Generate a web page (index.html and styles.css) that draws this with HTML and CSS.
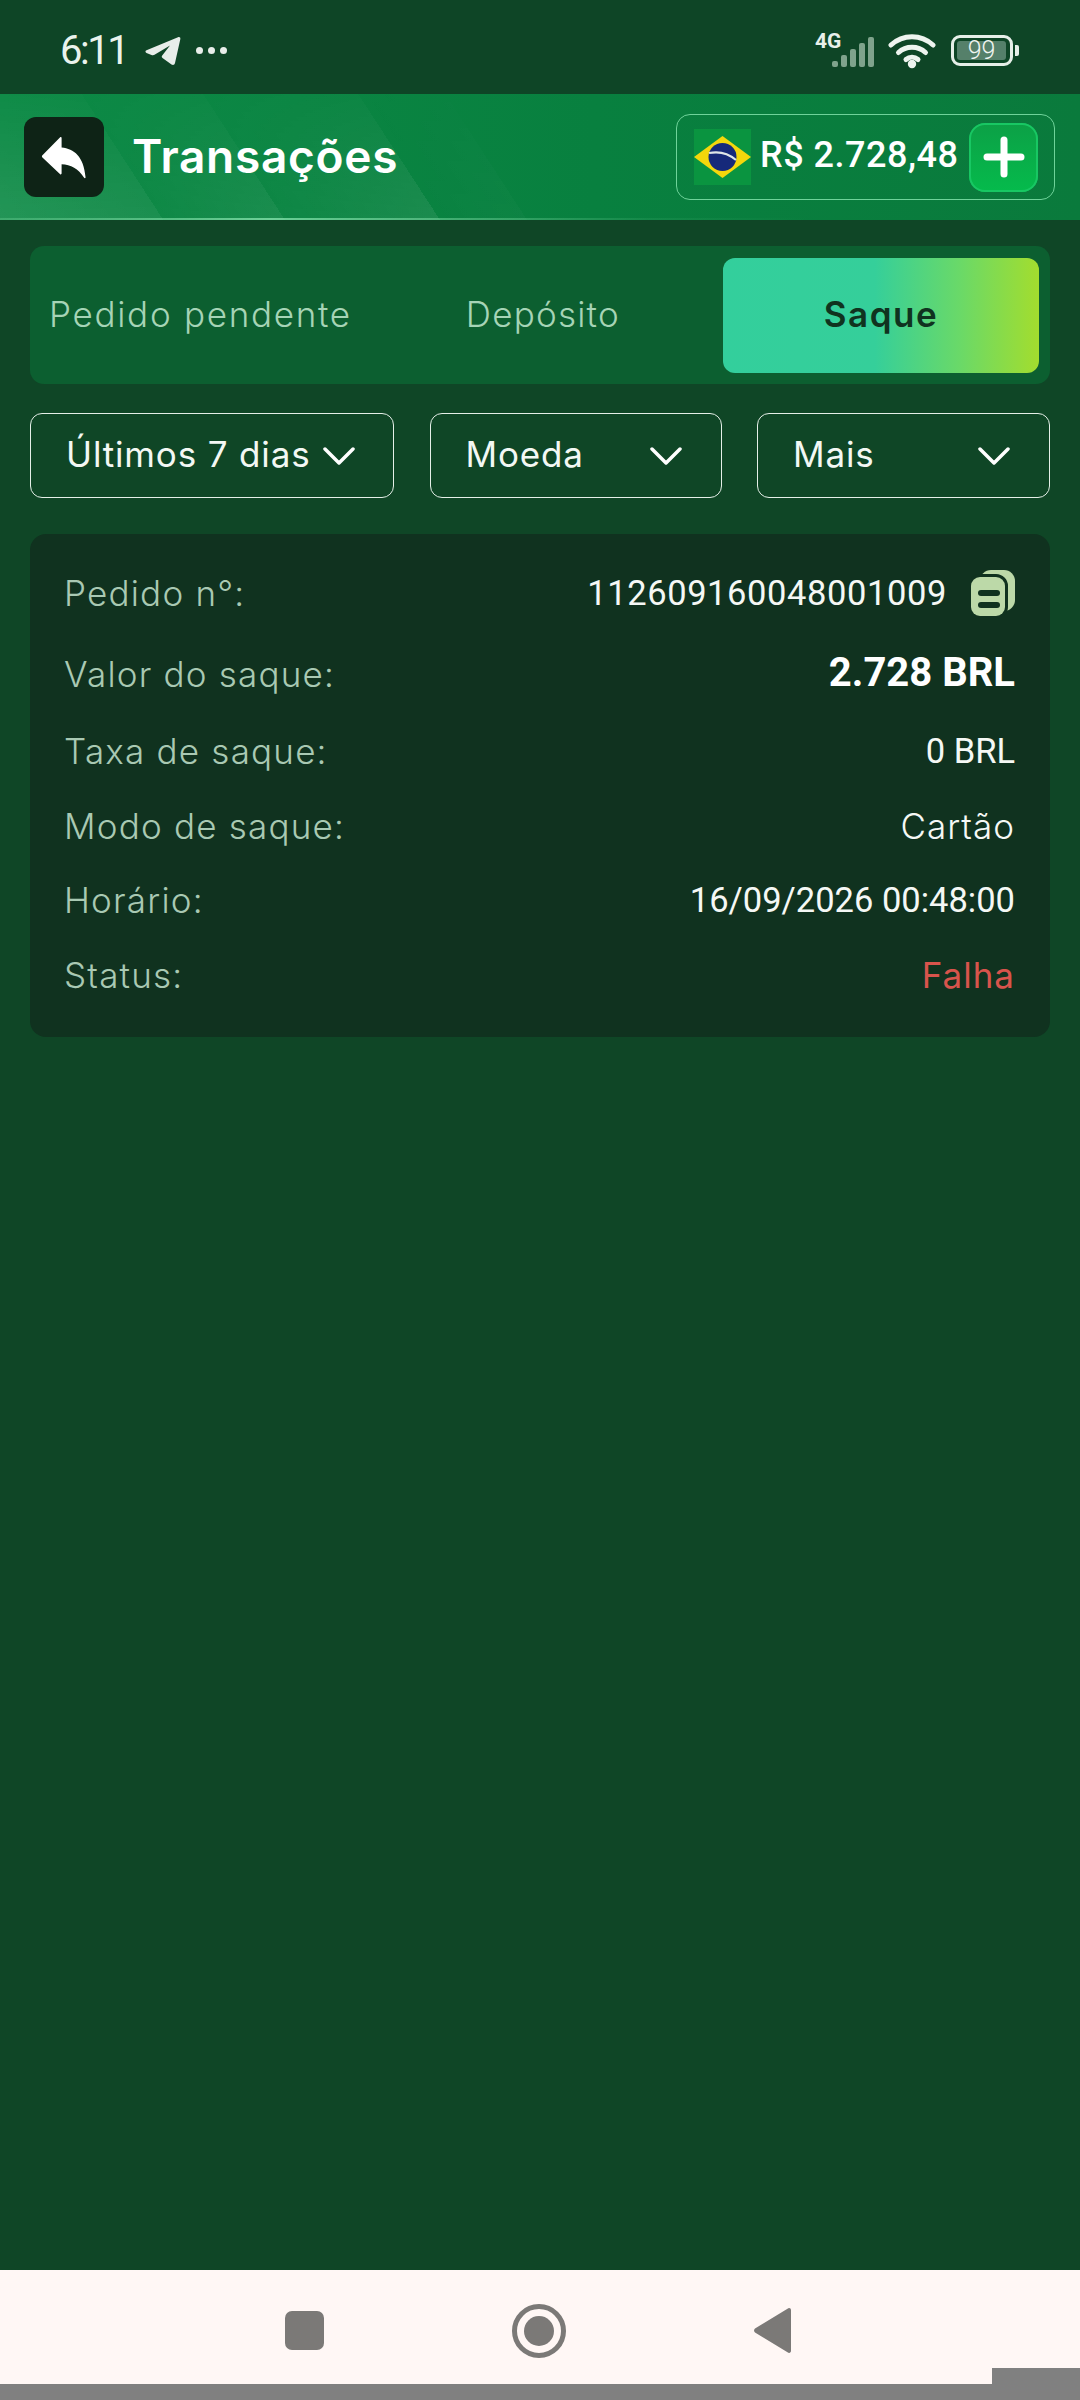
FILE: index.html
```html
<!DOCTYPE html>
<html lang="pt">
<head>
<meta charset="utf-8">
<title>Transações</title>
<link rel="stylesheet" href="styles.css">
</head>
<body>
<div class="page">
  <div class="statusbar">
    <div class="status-left">
      <span class="time">6:11</span>
      <svg class="tg" viewBox="0 0 36 30"><path d="M1.5 14.2 33 1.2c1.6-.6 2.7.4 2.3 2L30 27c-.4 1.9-1.900 2.500-3.500 1.500l-9-6.500c-1-.8-1-1.800-.1-2.700L25 9.500 9.500 18.800c-.9.5-2 .5-3 .1l-5-2c-1.400-.6-1.400-2.100 0-2.700z"/></svg>
      <span class="dots"><i></i><i></i><i></i></span>
    </div>
    <div class="status-right">
      <div class="net">
        <span class="net-text">4G</span>
        <svg class="net-svg" viewBox="0 0 62 34"><g class="net-bars"><rect x="18" y="27" width="6" height="6" rx="2"/><rect x="27" y="21" width="6" height="12" rx="2"/><rect x="36" y="15" width="6" height="18" rx="2"/><rect x="45" y="9" width="6" height="24" rx="2"/><rect x="54" y="3" width="6" height="30" rx="2"/></g></svg>
      </div>
      <svg class="wifi" viewBox="0 0 48 36"><path class="wifi-arc" d="M3 12C15 1 33 1 45 12"/><path class="wifi-arc" d="M10.500 19.500C18 12.500 30 12.500 37.500 19.500"/><path class="wifi-arc" d="M18 26.500C21.500 23.500 26.500 23.500 30 26.500"/><circle class="wifi-dot" cx="24" cy="31" r="4.200"/></svg>
      <div class="battery"><div class="battery-body"><div class="battery-fill">99</div></div><div class="battery-nub"></div></div>
    </div>
  </div>

  <header class="appbar">
    <div class="appbar-left">
      <div class="back">
        <svg class="back-icon" viewBox="0 0 48 48"><path d="M20 3.500c.8-.6 1.500 0 1.500 1V14c13 1.500 23 9 25 31 .1 1.300-1 1.500-1.700.5C39 36 31 32 21.500 31.500V41c0 1-.8 1.500-1.500 1L1.500 24.500c-.7-.7-.7-1.600 0-2.300z"/></svg>
      </div>
      <h1 class="title">Transações</h1>
    </div>
    <div class="balance">
      <svg class="flag" viewBox="0 0 57 56"><rect width="57" height="56" fill="#0a9440"/><path d="M28.500 7 57 28 28.500 49 0 28z" fill="#f4d70c"/><circle cx="28.500" cy="28" r="14" fill="#16297a"/><path d="M15 24c10-2 19 0 27 7" fill="none" stroke="#dfe6e8" stroke-width="2.200"/></svg>
      <span class="amount">R$ 2.728,48</span>
      <div class="plus">
        <svg class="plus-icon" viewBox="0 0 42 42"><path d="M21 4v34M4 21h34"/></svg>
      </div>
    </div>
  </header>

  <main class="content">
    <div class="tabs">
      <div class="tab tab-pending">Pedido pendente</div>
      <div class="tab tab-deposit">Depósito</div>
      <div class="tab tab-active">Saque</div>
    </div>

    <div class="filters">
      <div class="filter filter-date"><span class="filter-label">Últimos 7 dias</span><svg class="chev" viewBox="0 0 32 20"><path d="M2 3l14 14L30 3"/></svg></div>
      <div class="filter filter-coin"><span class="filter-label">Moeda</span><svg class="chev" viewBox="0 0 32 20"><path d="M2 3l14 14L30 3"/></svg></div>
      <div class="filter filter-more"><span class="filter-label">Mais</span><svg class="chev" viewBox="0 0 32 20"><path d="M2 3l14 14L30 3"/></svg></div>
    </div>

    <section class="card">
      <div class="row row-tall">
        <span class="label">Pedido n°:</span>
        <span class="value-wrap">
          <span class="value num order">112609160048001009</span>
          <svg class="copy" viewBox="0 0 44 46"><rect class="copy-back" x="9" y="0" width="35" height="41" rx="11"/><rect class="copy-front" x="0" y="7" width="34" height="39" rx="9"/><rect class="copy-line" x="7" y="20" width="22" height="6" rx="3"/><rect class="copy-line" x="7" y="32" width="22" height="6" rx="3"/></svg>
        </span>
      </div>
      <div class="row row-tall">
        <span class="label">Valor do saque:</span>
        <span class="value num strong">2.728 BRL</span>
      </div>
      <div class="row">
        <span class="label">Taxa de saque:</span>
        <span class="value num">0 BRL</span>
      </div>
      <div class="row">
        <span class="label">Modo de saque:</span>
        <span class="value">Cartão</span>
      </div>
      <div class="row">
        <span class="label">Horário:</span>
        <span class="value num">16/09/2026 00:48:00</span>
      </div>
      <div class="row">
        <span class="label">Status:</span>
        <span class="value fail">Falha</span>
      </div>
    </section>
  </main>

  <nav class="navbar">
    <div class="nav-square"></div>
    <div class="nav-circle"><div class="nav-dot"></div></div>
    <svg class="nav-back" viewBox="0 0 37 45"><path d="M33.500.8c1.500-1.400 3.500-.6 3.500 1.400v40.600c0 2-2 2.800-3.500 1.400L1 24.500c-1.300-1.200-1.300-2.800 0-4z"/></svg>
  </nav>
  <div class="gesture"></div>
  <div class="corner"></div>
</div>
</body>
</html>
```
FILE: styles.css
```css
* { box-sizing: border-box; }
html, body { margin: 0; padding: 0; }
body { font-family: "Inter", "Roboto", sans-serif; background: #0f4626; }

.page {
  position: relative;
  width: 1080px;
  height: 2400px;
  display: flex;
  flex-direction: column;
  background: #0f4626;
  overflow: hidden;
}

/* status bar */
.statusbar {
  height: 94px;
  flex: none;
  background: #0e4526;
  display: flex;
  justify-content: space-between;
  align-items: center;
  padding: 7px 61px 0 60px;
  color: #eaf3ec;
}
.status-left { display: flex; align-items: center; }
.time { font-family: "Roboto", sans-serif; font-size: 40px; font-weight: 400; line-height: 48px; letter-spacing: -2.500px; }
.tg { width: 36px; height: 30px; margin-left: 18px; fill: #e8eeea; }
.dots { display: flex; gap: 5px; margin-left: 15px; }
.dots i { display: block; width: 7px; height: 7px; border-radius: 50%; background: #e8eeea; }
.status-right { display: flex; align-items: center; }
.net { position: relative; width: 62px; height: 34px; }
.net-svg { display: block; width: 62px; height: 34px; }
.net-text {
  position: absolute;
  left: 1px;
  top: 0;
  font-family: "Roboto", sans-serif;
  font-size: 21px;
  font-weight: 700;
  line-height: 14px;
  color: #e8f0ea;
}
.net-bars { fill: #7fa38c; }
.wifi { width: 48px; height: 36px; margin-left: 12px; }
.wifi-arc { fill: none; stroke: #eef4ef; stroke-width: 5; stroke-linecap: round; }
.wifi-dot { fill: #eef4ef; }
.battery { display: flex; align-items: center; margin-left: 15px; }
.battery-body {
  width: 62px; height: 31px;
  border: 3px solid #e6efe8;
  border-radius: 9px;
  padding: 3px;
}
.battery-fill {
  width: 49px;
  height: 19px;
  background: #55806a;
  border-radius: 3px;
  color: #f0f5f1;
  font-family: "Roboto", sans-serif;
  font-size: 25px;
  font-weight: 300;
  line-height: 19px;
  text-align: center;
}
.battery-nub { width: 4px; height: 11px; background: #e6efe8; border-radius: 0 2px 2px 0; margin-left: 2px; }

/* app bar */
.appbar {
  position: relative;
  height: 126px;
  flex: none;
  display: flex;
  justify-content: space-between;
  align-items: center;
  padding: 0 25px 0 24px;
  background: linear-gradient(90deg, #0c8a45 0%, #08803f 55%, #0a7a3c 100%);
}
.appbar::before {
  content: "";
  position: absolute;
  inset: 0;
  background: linear-gradient(57deg,
    rgba(255,255,255,.10) 0, rgba(255,255,255,.07) 137px,
    rgba(255,255,255,.02) 137px, rgba(255,255,255,.07) 239px,
    rgba(255,255,255,.02) 239px, rgba(255,255,255,.08) 369px,
    rgba(255,255,255,.005) 369px, rgba(255,255,255,.025) 442px,
    rgba(255,255,255,0) 442px);
  -webkit-mask-image: linear-gradient(to top, #000 0, rgba(0,0,0,.2) 100%);
  mask-image: linear-gradient(to top, #000 0, rgba(0,0,0,.2) 100%);
}
.appbar::after {
  content: "";
  position: absolute;
  left: 0; right: 0; bottom: 0;
  height: 2px;
  background: linear-gradient(90deg, rgba(120,220,160,.3) 0, rgba(130,225,170,.8) 25%, rgba(120,220,160,.1) 60%, transparent 75%);
}
.appbar-left { position: relative; display: flex; align-items: center; gap: 28px; }
.back {
  width: 80px; height: 80px;
  border-radius: 12px;
  background: #0e2316;
  display: flex;
  align-items: center;
  justify-content: center;
}
.back-icon { width: 46px; height: 46px; fill: #fff; }
.title {
  margin: -2px 0 0;
  font-family: "Inter", sans-serif;
  font-size: 46px;
  font-weight: 600;
  line-height: 54px;
  letter-spacing: .7px;
  color: #fff;
}
.balance {
  position: relative;
  width: 379px;
  height: 86px;
  border: 1.500px solid #6fd39a;
  border-radius: 14px;
  display: flex;
  align-items: center;
  padding: 0 16px 0 17px;
}
.flag { width: 57px; height: 56px; flex: none; }
.amount {
  margin: -4px 0 0 9px;
  font-family: "Roboto", sans-serif;
  font-size: 36px;
  font-weight: 500;
  letter-spacing: .5px;
  color: #fff;
  white-space: nowrap;
}
.plus {
  margin-left: auto;
  width: 69px; height: 69px;
  border-radius: 16px;
  background: linear-gradient(180deg, #0ca046 0%, #05bb4c 100%);
  box-shadow: inset 0 0 0 2px #18c763;
  display: flex;
  align-items: center;
  justify-content: center;
}
.plus-icon { width: 42px; height: 42px; fill: none; stroke: #fff; stroke-width: 7; stroke-linecap: round; }

/* content */
.content { flex: 1; padding: 26px 30px 0; display: flex; flex-direction: column; }
.tabs {
  height: 138px;
  background: #0c5f30;
  border-radius: 14px;
  display: flex;
  align-items: center;
  position: relative;
  padding-right: 11px;
}
.tab { font-size: 35px; font-weight: 300; color: #a6d4b6; white-space: nowrap; line-height: 42px; }
.tab-pending { margin: -3px 0 0 19px; letter-spacing: 1.700px; }
.tab-deposit { margin: -3px 0 0 114px; letter-spacing: 1.200px; }
.tab-active {
  margin-left: auto;
  width: 316px;
  height: 115px;
  padding-bottom: 3px;
  border-radius: 12px;
  display: flex;
  align-items: center;
  justify-content: center;
  font-weight: 600;
  color: #10331f;
  letter-spacing: 1.500px;
  background: linear-gradient(90deg, #33cf9c 0%, #35cf9a 48%, #6ad968 75%, #a3dd2e 100%);
}

.filters { display: flex; justify-content: space-between; margin-top: 29px; }
.filter {
  height: 85px;
  border: 1.500px solid #e5efe8;
  border-radius: 12px;
  display: flex;
  align-items: center;
  justify-content: space-between;
  padding: 0 39px 0 35px;
  color: #f3f8f4;
}
.filter-date { width: 364px; padding-right: 38px; }
.filter-coin { width: 292px; }
.filter-more { width: 293px; }
.filter-label { margin-top: -3px; font-size: 35px; font-weight: 400; letter-spacing: .85px; white-space: nowrap; }
.chev { width: 32px; height: 20px; fill: none; stroke: #fff; stroke-width: 3.500px; stroke-linecap: round; stroke-linejoin: round; flex: none; }

.card {
  margin-top: 36px;
  height: 503px;
  background: #10321f;
  border-radius: 16px;
  padding: 36px 35px 0 34px;
  display: flex;
  flex-direction: column;
  gap: 34.600px;
}
.row { height: 40px; display: flex; justify-content: space-between; align-items: center; }
.row-tall { height: 46px; }
.label { font-size: 35px; font-weight: 300; color: #a9c9b3; letter-spacing: 1.200px; white-space: nowrap; }
.value { font-size: 35px; font-weight: 300; color: #f5f8f5; letter-spacing: 1px; white-space: nowrap; }
.value.num { font-family: "Roboto", sans-serif; font-size: 34.500px; font-weight: 400; letter-spacing: 0; color: #f5f8f5; }
.value.num.order { letter-spacing: .6px; }
.value.num.strong { margin-top: -2px; font-size: 40px; font-weight: 700; color: #fff; }
.value.fail { color: #d8544c; font-weight: 400; }
.value-wrap { display: flex; align-items: center; gap: 24px; }
.copy { width: 44px; height: 46px; flex: none; }
.copy-back { fill: #bcd9a8; }
.copy-front { fill: #bcd9a8; stroke: #10321f; stroke-width: 6px; paint-order: stroke; }
.copy-line { fill: #10321f; }

/* nav */
.navbar {
  height: 114px;
  flex: none;
  background: #fff7f5;
  display: flex;
  align-items: center;
  position: relative;
  padding: 0 0 0 285px;
}
.nav-square { width: 39px; height: 39px; border-radius: 7px; background: #7b7977; margin-top: 7px; }
.nav-circle {
  width: 54px; height: 54px;
  margin-left: 188px;
  border: 5px solid #7b7977;
  border-radius: 50%;
  display: flex;
  align-items: center;
  justify-content: center;
  margin-top: 7px;
}
.nav-dot { width: 30px; height: 30px; border-radius: 50%; background: #7b7977; }
.nav-back { width: 37px; height: 45px; margin-left: 188px; fill: #7b7977; margin-top: 7px; }
.gesture { height: 16px; flex: none; background: #808080; }
.corner { position: absolute; right: 0; bottom: 0; width: 88px; height: 32px; background: #808080; }
```
